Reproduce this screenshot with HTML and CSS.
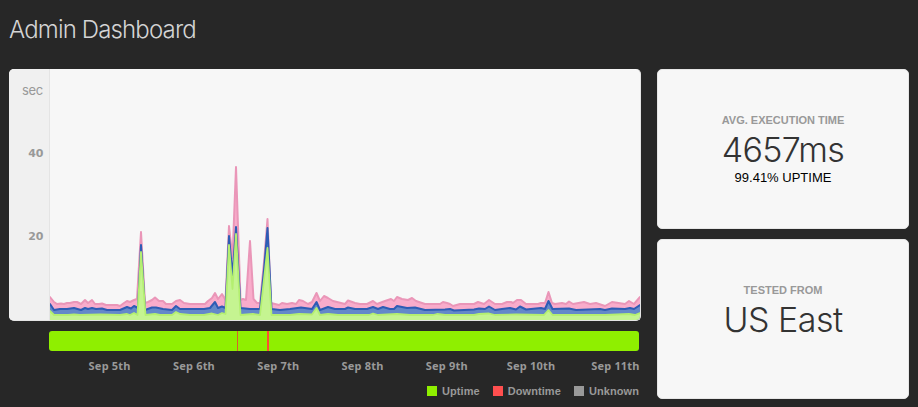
FILE: index.html
```html
<!DOCTYPE html>
<html lang="en">
<head>
<meta charset="utf-8">
<title>Admin Dashboard</title>
<link rel="stylesheet" href="styles.css">
</head>
<body>
<h1 class="title"><span>Admin Dashboard</span></h1>
<main class="dashboard">
  <section class="monitor">
    <div class="chart-card">
      <div class="axis"><span class="unit">sec</span><span class="tick">40</span><span class="tick">20</span></div>
      <svg class="chart" viewBox="50 69 590 251" width="590" height="251">
        <path class="pink" d="M48 323V297H50L54 302 57 304 61 303.500 64 304 67 303 70 303 74 302 77 302 81 304 85 300 88 303 92 300 95 304 99 304 102 303.500 106 305 117 305 120 306 124 303 127 301 130 302 134 300 137 299 141 232 145 303 148 302 152 300 155 297.500 159 301 163 301 166 304 172 304 176 301 180 300 184 303 190 304 205 304 208 301 212 298 215 293 218 299 222 294 225.500 300 229 226 232.500 258 236 167 240.500 300 243 299 246 300 250 241 253.500 299 257 303 260 303 264 262 267.500 219 271 303 275 304 279 305 282 303 287 304 292 303 296 304 299 300 303 301 308 304 312 302 316.500 293 320 301 324 296 328 298 333 301 337 302 341 303 345 304 348 300.500 355 303 360 304 367 304 373 301 377 304 385 301 391 299 394 301 397 297 402 299 408 300 412 298 416 301 425 304 440 304 443 302 447 303 450 304 453 306 460 304 474 304 478 302 484 304 489 300 495 304 502 304 507 302 511 302 513 303 517 300 521 300 526 304 538 304 541 303 545 303 548.500 292 552 303 555 304 562 303 566 304 569 301.500 573 304 584 302 590 304 596 303 605 306 612 302 625 304 629 301 634 304 640 297H642V323Z"/>
        <path class="blue" d="M48 323V304H50L54 310 60 309 67 309 74 308 81 310 85 308 88 309 92 308 96 309 102 308.500 107 310 120 310 127 307 131 308.500 134 306 138 308 141 245 145 310 152 307.500 156 307.500 163 309 172 310 176 306 180 309 190 309 204 309 210 308 215 302 218 308 222 306.500 225.500 308 229 236 232.500 276 236 227 240.500 308 250 309 260 309 264 270 267.500 228 271.500 309 280 310 290 309 301 307.500 312 309 316.500 302 320 310 328 307 335 309 345 309 348 307.500 355 309 367 309 373 307 378 309 383 307 390 309 394 309 397 306 407 308 415 307.500 425 310 445 309.500 450 309 454 310.500 474 309.500 479 308.500 485 309 489 306.500 495 310 502 309 510 308 516 309.500 520 306.500 526 309.500 541 308 545 309 548.500 301 552.500 309 569 308.500 576 310 600 309 605 310 612 308.500 625 309 630 308 634 309 640 305H642V323Z"/>
        <path class="green" d="M48 323V311H50L54 315 68 315 74 314.500 80 315 100 314.500 120 315 127 314 130 315 134 313 137.500 315 141 252 145.500 315 155 314 160 315 172 315 176 312 180 314 190 315 204 315 212 313.500 218 315 222 313 225.500 314 229 245 232.500 289 236 234 240.500 315 253 314 260 315 267.500 248 271.500 315 290 315 299 314 312 314.500 316.500 308 320 315 328 314 338 315 369 315 373 313.500 378 315 397 314 410 315 433 315 437 314 445 315 474 315 479 314 489 313.500 495 315 516 314.500 544 315 548.500 310 552.500 315 595 315 605 315 629 314 635 315 640 313H642V323Z"/>
      </svg>
    </div>
    <div class="timeline"><i class="slow"></i><i class="down"></i></div>
    <div class="dates"><span>Sep 5th</span><span>Sep 6th</span><span>Sep 7th</span><span>Sep 8th</span><span>Sep 9th</span><span>Sep 10th</span><span>Sep 11th</span></div>
    <div class="legend"><span class="up">Uptime</span><span class="fail">Downtime</span><span class="unknown">Unknown</span></div>
  </section>
  <aside class="stats">
    <section class="stat"><h2>AVG. EXECUTION TIME</h2><strong class="time">4657ms</strong><p>99.41% UPTIME</p></section>
    <section class="stat"><h2>TESTED FROM</h2><strong class="place">US East</strong></section>
  </aside>
</main>
</body>
</html>
```
FILE: styles.css
```css
* { box-sizing: border-box; }
body { margin: 0; padding: 0 9px; height: 407px; overflow: hidden; background: #272727; font-family: "Liberation Sans", sans-serif; }
.title { margin: 0; height: 69px; padding-top: 15px; color: #d4d4d4; font: 300 24px/30px Inter, sans-serif; letter-spacing: -.85px; }
.dashboard { display: flex; gap: 16px; }
.monitor { width: 632px; }
.chart-card { display: flex; height: 252px; overflow: hidden; border: 1px solid #e4e4e4; border-width: 0 1px 1px 0; border-radius: 5px; background: #f7f7f7; }
.axis { flex: 0 0 41px; padding: 11px 6px 0 0; border-right: 1px solid #e4e4e4; background: #f0f0f0; color: #999; text-align: right; }
.axis span { display: block; }
.unit { height: 64px; font: 400 13px/20px Inter, sans-serif; letter-spacing: -.3px; }
.tick { height: 83px; font: bold 11px/20px "DejaVu Sans", sans-serif; letter-spacing: -.3px; }
.chart { flex: 0 0 590px; display: block; }
.chart path { stroke-linejoin: round; }
.pink { fill: #f9accb; stroke: #ea96b8; stroke-width: 2; }
.blue { fill: #6488c9; stroke: #2e5cb5; stroke-width: 2; }
.green { fill: #c5f491; stroke: #b4ef70; stroke-width: 1.8; }
.timeline { display: flex; width: 590px; height: 20px; margin: 10px 0 0 40px; border-radius: 3px; background: #8fef00; }
.slow { width: 1px; margin-left: 188px; background: #d9602b; }
.down { width: 2px; margin-left: 29px; background: #ff4f32; }
.dates { display: grid; grid-template-columns: repeat(7, 84.3px); margin: 6px 0 0 58.5px; width: 591px; color: #999; font: bold 11px/18px "Noto Sans", sans-serif; letter-spacing: .2px; text-align: center; white-space: nowrap; }
.legend { display: flex; justify-content: flex-end; gap: 13px; height: 14px; margin-top: 9px; padding-right: 2px; color: #999; font: bold 11px/14px "Liberation Sans", sans-serif; letter-spacing: .08px; }
.legend span { display: flex; align-items: center; gap: 5px; }
.legend span::before { content: ""; width: 10px; height: 10px; background: #999; }
.legend .up::before { background: #8fef00; }
.legend .fail::before { background: #ff4f4f; }
.stats { display: grid; grid-template-rows: 160px 160px; gap: 10px; width: 252px; }
.stat { padding-top: 44px; border: 1px solid #e6e6e6; border-radius: 5px; background: #f7f7f7; text-align: center; }
.stat h2 { margin: 0; color: #999; font-size: 11px; line-height: 13px; letter-spacing: 0; }
.stat strong { display: block; height: 45px; color: #333; font: 300 34px/45px Inter, sans-serif; letter-spacing: -.7px; }
.stat .place { letter-spacing: -.5px; }
.stat p { margin: -1px 0 0; color: #000; font-size: 13px; line-height: 14px; }
```
